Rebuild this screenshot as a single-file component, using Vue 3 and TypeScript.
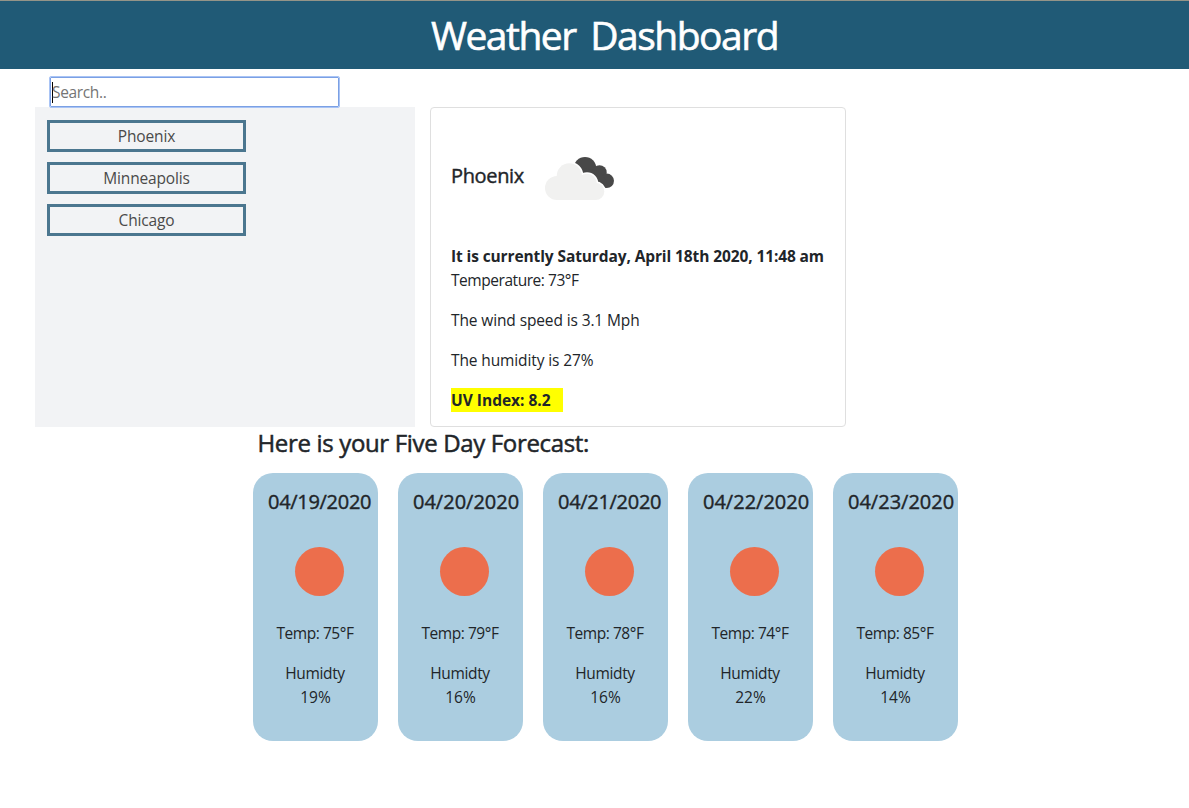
<script setup lang="ts">
interface Day {
  date: string
  temp: number
  humidity: number
}

const cities: string[] = ['Phoenix', 'Minneapolis', 'Chicago']

const days: Day[] = [
  { date: '04/19/2020', temp: 75, humidity: 19 },
  { date: '04/20/2020', temp: 79, humidity: 16 },
  { date: '04/21/2020', temp: 78, humidity: 16 },
  { date: '04/22/2020', temp: 74, humidity: 22 },
  { date: '04/23/2020', temp: 85, humidity: 14 },
]
</script>

<template>
  <div class="page">
    <header class="banner"><h1>Weather Dashboard</h1></header>
    <div class="search"><span class="caret"></span><span class="placeholder">Search..</span></div>
    <main class="columns">
      <aside class="history">
        <button v-for="city in cities" :key="city" class="city" type="button">{{ city }}</button>
      </aside>
      <section class="current">
        <div class="place">
          <h2>Phoenix</h2>
          <svg class="clouds" width="100" height="100" viewBox="0 0 100 100">
            <g fill="#484848">
              <circle cx="55" cy="38.3" r="11.3" />
              <circle cx="69.5" cy="42.4" r="7.2" />
              <circle cx="76.7" cy="50.8" r="7.3" />
              <path d="M55 38 L70 42 L77 51 L76 58 L55 50Z" />
            </g>
            <g class="front">
              <circle cx="27" cy="58" r="12" />
              <circle cx="39.3" cy="45.8" r="12.6" />
              <circle cx="57" cy="53.5" r="9.8" />
              <circle cx="65.7" cy="61.4" r="8.6" />
              <path d="M27 50H57L65.7 58V70H27Z" />
            </g>
            <g fill="#f1f1f0">
              <circle cx="27" cy="58" r="12" />
              <circle cx="39.3" cy="45.8" r="12.6" />
              <circle cx="57" cy="53.5" r="9.8" />
              <circle cx="65.7" cy="61.4" r="8.6" />
              <path d="M27 50H57L65.7 58V70H27Z" />
            </g>
          </svg>
        </div>
        <p class="now">It is currently Saturday, April 18th 2020, 11:48 am</p>
        <p class="line temp">Temperature: 73°F</p>
        <p class="line wind">The wind speed is 3.1 Mph</p>
        <p class="line humid">The humidity is 27%</p>
        <p class="uv">UV Index: 8.2</p>
      </section>
    </main>
    <h2 class="forecast-title">Here is your Five Day Forecast:</h2>
    <section class="forecast">
      <article v-for="day in days" :key="day.date" class="day">
        <h3 :class="{ narrow: day.date.includes('1') }">{{ day.date }}</h3>
        <div class="sun"></div>
        <p class="day-temp">Temp: {{ day.temp }}°F</p>
        <p class="day-humid"><span class="label">Humidty</span><br />{{ day.humidity }}%</p>
      </article>
    </section>
  </div>
</template>

<style>
body {
  background: #fff;
}
</style>

<style scoped>
.page {
  height: 808px;
  overflow: hidden;
  font-family: "Segoe UI", "Open Sans", "Noto Sans", sans-serif;
  font-size: 15.5px;
  line-height: 24px;
  color: #212529;
}
h1, h2, h3, p {
  margin: 0;
}
.banner {
  box-sizing: border-box;
  height: 69px;
  border-top: 1px solid #949488;
  background: #205a76;
  padding: 10px 0 0 20px;
  text-align: center;
  color: #fff;
}
.banner h1 {
  font: 400 39px/48px "Trebuchet MS", "Open Sans", sans-serif;
  letter-spacing: -1.5px;
  word-spacing: 6px;
  -webkit-text-stroke: 0.6px #fff;
}
.search {
  box-sizing: border-box;
  width: 289px;
  height: 30px;
  margin: 8px 0 0 50px;
  border: 1px solid #7ba0e4;
  outline: 1px solid #a9c4f5;
  border-radius: 1px;
  display: flex;
  align-items: center;
  padding-left: 1px;
  background: #fff;
  position: relative;
  color: #757575;
  letter-spacing: -0.35px;
}
.caret {
  width: 1px;
  height: 21px;
  background: #000;
  margin-right: -1px;
}
.columns {
  display: flex;
  gap: 15px;
  height: 320px;
  margin-left: 35px;
}
.history {
  box-sizing: border-box;
  width: 380px;
  padding: 13px 12px;
  background: #f2f3f5;
  display: flex;
  flex-direction: column;
  gap: 10px;
}
.city {
  box-sizing: border-box;
  width: 199px;
  height: 32px;
  padding: 0;
  border: 3px solid #4b768f;
  background: transparent;
  color: #4a4a4a;
  font: inherit;
  letter-spacing: -0.15px;
}
.current {
  box-sizing: border-box;
  width: 416px;
  border: 1px solid #dfdfdf;
  border-radius: 4px;
  padding: 22px 20px 0;
  white-space: nowrap;
}
.place {
  display: flex;
  align-items: center;
  height: 92px;
}
.place h2 {
  width: 79px;
  font-size: 20px;
  font-weight: 500;
  letter-spacing: -0.35px;
  -webkit-text-stroke: 0.4px #212529;
}
.clouds {
  flex: none;
  margin-top: 8px;
}
.front {
  fill: #fff;
  stroke: #fff;
  stroke-width: 3;
}
.now {
  margin-top: 22px;
  font-weight: 700;
  letter-spacing: -0.11px;
}
.line {
  margin-bottom: 16px;
  letter-spacing: -0.12px;
}
.temp {
  letter-spacing: -0.45px;
}
.uv {
  width: 112px;
  background: #ff0;
  font-weight: 700;
}
.forecast-title {
  height: 46px;
  margin-left: 257.5px;
  font-size: 24px;
  line-height: 31px;
  font-weight: 500;
  letter-spacing: -0.34px;
  -webkit-text-stroke: 0.5px #212529;
}
.forecast {
  display: flex;
  gap: 20px;
  margin-left: 253px;
}
.day {
  box-sizing: border-box;
  width: 125px;
  height: 268px;
  padding: 17px 15px 0;
  border-radius: 20px;
  background: #abcde0;
  white-space: nowrap;
  text-align: center;
}
.day h3 {
  text-align: left;
  font-size: 20px;
  line-height: 24px;
  font-weight: 500;
  -webkit-text-stroke: 0.4px #212529;
}
.day h3.narrow {
  letter-spacing: -0.3px;
}
.sun {
  width: 49px;
  height: 49px;
  margin: 33px 0 25px 27px;
  border-radius: 50%;
  background: #ec6e4c;
}
.day-temp {
  margin-bottom: 16px;
  margin-right: 1px;
  letter-spacing: -0.45px;
}
.label {
  margin-right: 1px;
  letter-spacing: -0.35px;
}
</style>
